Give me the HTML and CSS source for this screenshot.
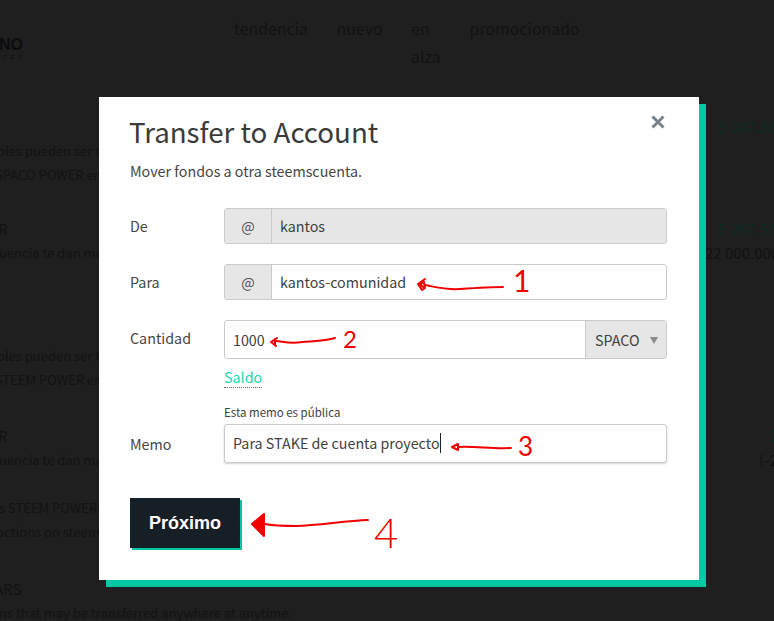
FILE: index.html
```html
<!DOCTYPE html>
<html lang="es">
<head>
<meta charset="utf-8">
<title>Transfer to Account</title>
<link rel="stylesheet" href="styles.css">
</head>
<body>
<div class="page">
  <header class="topbar">
    <div class="logo">
      <div class="logo-main">NO</div>
      <div class="logo-sub">T E S</div>
    </div>
    <nav class="nav">
      <span class="nav-item">tendencia</span>
      <span class="nav-item">nuevo</span>
      <span class="nav-item nav-narrow">en alza</span>
      <span class="nav-item">promocionado</span>
    </nav>
  </header>
  <main class="wallet">
    <section class="w-row w-row-a">
      <div class="w-left">
        <div class="w-line">&nbsp;</div>
        <div class="w-line w-cut-3">oles pueden ser t</div>
        <div class="w-line w-cut-5">SPACO POWER en</div>
      </div>
      <div class="w-right"><div class="w-line amt-green amt-a">5 347.06</div></div>
    </section>
    <section class="w-row w-row-b">
      <div class="w-left">
        <div class="w-line w-title">R</div>
        <div class="w-line w-cut">uencia te dan má</div>
      </div>
      <div class="w-right">
        <div class="w-line amt-green amt-a">5 267.56</div>
        <div class="w-line amt-b">22 000.000</div>
      </div>
    </section>
    <section class="w-row w-row-c">
      <div class="w-left">
        <div class="w-line w-cut-3">oles pueden ser t</div>
        <div class="w-line w-cut-5">STEEM POWER en</div>
      </div>
    </section>
    <section class="w-row w-row-d">
      <div class="w-left">
        <div class="w-line w-title">R</div>
        <div class="w-line w-cut">uencia te dan má</div>
      </div>
      <div class="w-right">
        <div class="w-line amt-green amt-c">2</div>
        <div class="w-line amt-d">(-2</div>
      </div>
    </section>
    <section class="w-row w-row-e">
      <div class="w-left">
        <div class="w-line w-cut">s STEEM POWER i</div>
        <div class="w-line w-cut-3">actions on steem</div>
      </div>
    </section>
    <section class="w-row w-row-f">
      <div class="w-left">
        <div class="w-line w-title w-title-long">ARS</div>
        <div class="w-line w-cut">ns that may be transferred anywhere at anytime.</div>
      </div>
    </section>
  </main>

  <div class="modal">
    <svg class="close" width="14" height="14" viewBox="0 0 14 14" aria-label="Cerrar">
      <path d="M1.5 1.5 12.5 12.5M12.5 1.5 1.5 12.5" fill="none" stroke="#78828a" stroke-width="3"/>
    </svg>
    <h1 class="title">Transfer to Account</h1>
    <p class="subtitle">Mover fondos a otra steemscuenta.</p>

    <div class="field field-de">
      <div class="label">De</div>
      <div class="group">
        <span class="addon">@</span>
        <span class="input input-disabled">kantos</span>
      </div>
    </div>

    <div class="field field-para">
      <div class="label">Para</div>
      <div class="group">
        <span class="addon">@</span>
        <span class="input">kantos-comunidad</span>
      </div>
    </div>

    <div class="field field-cantidad">
      <div class="label">Cantidad</div>
      <div class="stack">
        <div class="group group-tall">
          <span class="input input-first">1000</span>
          <span class="select">SPACO<i class="select-arrow"></i></span>
        </div>
        <a class="saldo">Saldo</a>
      </div>
    </div>

    <div class="field field-memo">
      <div class="label">Memo</div>
      <div class="stack">
        <div class="hint">Esta memo es pública</div>
        <div class="group group-tall group-memo">
          <span class="input input-first">Para STAKE de cuenta proyecto<i class="caret"></i></span>
        </div>
      </div>
    </div>

    <button class="next" type="button">Próximo</button>
  </div>

  <svg class="ink" width="774" height="621" viewBox="0 0 774 621">
    <g fill="none" stroke="#f00000" stroke-width="2" stroke-linecap="round" stroke-linejoin="round">
      <path d="M425 285C436 287 445 290 460 289 475 288 490 287 503 287"/>
      <path d="M425 279 418 284 422 290 425 288 424 282 420 284 423 287"/>
      <path d="M276 341C285 342 292 344 302 342 314 341 326 341 335 338"/>
      <path d="M271 342 277 338M271 342 276 346M275 339V345"/>
      <path d="M458 447C475 446 492 449 511 448"/>
      <path d="M452 447 458 444V450Z"/>
      <path d="M265 524C275 526 283 526 296 526 320 525 345 521 368 520"/>
      <path d="M252 524 264 514V536Z" fill="#f00000"/>
    </g>
    <text class="digit digit-1" x="513" y="292">1</text>
    <text class="digit digit-2" x="343" y="348">2</text>
    <text class="digit digit-3" x="518" y="456">3</text>
    <text class="digit digit-4" x="374" y="548">4</text>
  </svg>
</div>
</body>
</html>
```
FILE: styles.css
```css
* { box-sizing: border-box; }

html, body {
  margin: 0;
  padding: 0;
}

body {
  font-family: "Noto Sans CJK JP", "Noto Sans", sans-serif;
  font-size: 14.3px;
  color: #3c3c3c;
}

.page {
  position: relative;
  width: 774px;
  height: 621px;
  overflow: hidden;
  background: #1f1f1f;
}

/* dimmed page behind the dialog */
.topbar {
  display: flex;
  height: 92px;
  color: #121212;
}

.logo {
  width: 234px;
  padding-top: 37px;
  color: #0c0c10;
}

.logo-main {
  font-family: "Liberation Sans", sans-serif;
  font-weight: 700;
  font-size: 16px;
  line-height: 16px;
  margin-left: -1px;
}

.logo-sub {
  font-family: "Liberation Sans", sans-serif;
  font-size: 6px;
  line-height: 8px;
  margin-left: 3px;
  letter-spacing: 1px;
}

.nav {
  display: flex;
  gap: 28.5px;
  padding-top: 15px;
  font-size: 15.9px;
  line-height: 28px;
  align-items: flex-start;
}

.nav-narrow {
  width: 30px;
}

.wallet {
  font-size: 13px;
  line-height: 24px;
  color: #121212;
}

.w-row {
  display: grid;
  grid-template-columns: 705px 69px;
  white-space: nowrap;
}

.w-row-a { margin-top: 23px; }
.w-row-b { margin-top: 30px; }
.w-row-c { margin-top: 79px; }
.w-row-d { margin-top: 32px; }
.w-row-e { margin-top: 24px; }
.w-row-f { margin-top: 33px; }

.w-left { overflow: hidden; }
.w-right { overflow: hidden; font-size: 15px; }

.w-cut { margin-left: -1px; }
.w-cut-3 { margin-left: -3px; }
.w-cut-5 { margin-left: -5px; }
.w-title { font-size: 15px; margin-left: -2px; }
.w-title-long { margin-left: -6px; }

.amt-green { color: #0c2a24; }
.amt-a { padding-left: 14px; }
.amt-c { padding-left: 65px; }
.amt-d { padding-left: 54px; }

/* dialog */
.modal {
  position: absolute;
  left: 99px;
  top: 97px;
  width: 600px;
  height: 483px;
  padding: 14px 32px 0 31px;
  background: #fff;
  box-shadow: 7px 7px 0 #00c9a5;
}

.close {
  position: absolute;
  left: 552px;
  top: 18px;
}

.title {
  margin: 0 0 0 -1px;
  font-size: 27.7px;
  font-weight: 400;
  line-height: 40px;
  color: #3a3a3a;
}

.subtitle {
  margin: 9px 0 0;
  font-size: 14.3px;
  line-height: 22px;
  color: #454545;
}

.field {
  display: grid;
  grid-template-columns: 94px 443px;
  align-items: start;
}

.field-de { margin-top: 26px; }
.field-para { margin-top: 20px; }
.field-cantidad { margin-top: 20px; }
.field-memo { margin-top: 15px; align-items: end; }

.label {
  font-size: 14.3px;
  line-height: 36px;
  color: #454545;
}

.field-memo .label { line-height: 38px; }

.group {
  display: flex;
  height: 36px;
  border: 1px solid #cacaca;
  border-radius: 3px;
  overflow: hidden;
  line-height: 34px;
  font-size: 14.3px;
  background: #fff;
}

.group-tall {
  height: 39px;
  line-height: 37px;
}

.group-memo {
  line-height: 36px;
  box-shadow: 0 1px 2px rgba(0, 0, 0, 0.18);
}

.addon {
  flex: none;
  width: 47px;
  text-align: center;
  background: #e6e6e6;
  border-right: 1px solid #cacaca;
  color: #555;
}

.input {
  flex: 1;
  padding-left: 8px;
  color: #3f3f3f;
}

.input-disabled { background: #e6e6e6; }

.select {
  flex: none;
  position: relative;
  width: 81px;
  padding-left: 9px;
  background: #e6e6e6;
  border-left: 1px solid #cacaca;
  color: #3f3f3f;
}

.select-arrow {
  position: absolute;
  left: 64px;
  top: 16px;
  width: 0;
  height: 0;
  border-left: 4px solid transparent;
  border-right: 4px solid transparent;
  border-top: 7px solid #8a8a8a;
}

.stack {
  display: flex;
  flex-direction: column;
  align-items: stretch;
}

.saldo {
  align-self: flex-start;
  margin-top: 7px;
  font-size: 14.3px;
  line-height: 21px;
  color: #1ad6b0;
  border-bottom: 1px dotted #666;
}

.hint {
  font-size: 11.5px;
  line-height: 18px;
  margin-bottom: 3px;
  color: #3f3f3f;
}

.caret {
  display: inline-block;
  width: 1px;
  height: 20px;
  margin-bottom: -4px;
  background: #222;
}

.next {
  display: block;
  width: 110px;
  height: 50px;
  margin-top: 35px;
  padding: 0;
  border: 0;
  background: #171f26;
  box-shadow: 2px 2px 0 #00c9a5;
  font-family: "Liberation Sans", sans-serif;
  font-size: 18px;
  font-weight: 700;
  color: #fff;
}

/* hand-drawn notes on top of the screenshot */
.ink {
  position: absolute;
  left: 0;
  top: 0;
  pointer-events: none;
}

.digit {
  font-family: "Lato", sans-serif;
  font-weight: 400;
  fill: #f00000;
}

.digit-1 { font-size: 30px; }
.digit-2 { font-size: 24px; }
.digit-3 { font-size: 26px; }
.digit-4 { font-size: 42px; font-weight: 300; }
```
